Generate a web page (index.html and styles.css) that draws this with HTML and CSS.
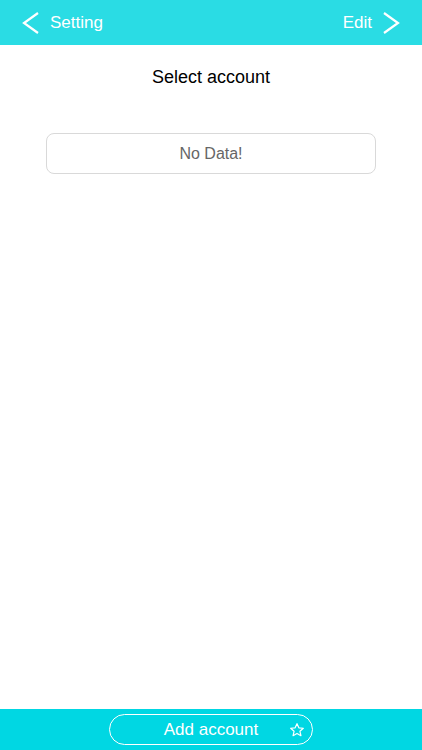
FILE: index.html
```html
<!DOCTYPE html>
<html lang="en">
<head>
  <meta charset="UTF-8" />
  <meta name="viewport" content="width=device-width, initial-scale=1.0"/>
  <title>Select account</title>
  <link rel="stylesheet" href="styles.css">
</head>
<body>
  <div class="app">
    <header class="nav-bar">
      <a class="nav-link" href="#">
        <svg class="chevron" width="18" height="22" viewBox="0 0 18 22">
          <polyline points="16,1 2,11 16,21" fill="none" stroke="#fff" stroke-width="2.2" stroke-linejoin="miter"/>
        </svg>
        <span>Setting</span>
      </a>
      <a class="nav-link" href="#">
        <span>Edit</span>
        <svg class="chevron" width="18" height="22" viewBox="0 0 18 22">
          <polyline points="2,1 16,11 2,21" fill="none" stroke="#fff" stroke-width="2.2" stroke-linejoin="miter"/>
        </svg>
      </a>
    </header>

    <main class="content">
      <h2 class="title">Select account</h2>
      <div class="empty-box">No Data!</div>
    </main>

    <footer class="bottom-bar">
      <button class="add-btn">
        <span>Add account</span>
        <svg class="star" width="16" height="16" viewBox="0 0 24 24">
          <polygon points="12,2.5 14.8,8.8 21.5,9.4 16.4,13.9 17.9,20.6 12,17.1 6.1,20.6 7.6,13.9 2.5,9.4 9.2,8.8" fill="none" stroke="#fff" stroke-width="1.8" stroke-linejoin="round"/>
        </svg>
      </button>
    </footer>
  </div>
</body>
</html>
```

FILE: styles.css
```css
body {
  margin: 0;
  font-family: 'Liberation Sans', Arial, sans-serif;
  background: #fff;
}
.app {
  display: flex;
  flex-direction: column;
  height: 750px;
}
.nav-bar {
  height: 45px;
  background-color: #2adce4;
  display: flex;
  justify-content: space-between;
  align-items: center;
  padding: 0 22px 0 22px;
  flex-shrink: 0;
}
.nav-link {
  display: flex;
  align-items: center;
  gap: 10px;
  color: #fff;
  text-decoration: none;
  font-size: 17px;
}
.chevron {
  display: block;
}
.content {
  flex: 1;
  display: flex;
  flex-direction: column;
  align-items: center;
}
.title {
  margin: 21px 0 0;
  font-size: 18px;
  font-weight: normal;
  color: #000;
  line-height: 22px;
}
.empty-box {
  margin-top: 45px;
  width: 328px;
  height: 39px;
  border: 1px solid #d9d9d9;
  border-radius: 8px;
  display: flex;
  justify-content: center;
  align-items: center;
  color: #666;
  font-size: 16px;
}
.bottom-bar {
  height: 41px;
  background-color: #00d7e3;
  display: flex;
  justify-content: center;
  align-items: center;
  flex-shrink: 0;
}
.add-btn {
  position: relative;
  width: 204px;
  height: 31px;
  border: 1.5px solid #fff;
  border-radius: 16px;
  background: transparent;
  color: #fff;
  font-family: 'Liberation Sans', Arial, sans-serif;
  font-size: 17px;
  padding: 0;
  display: flex;
  justify-content: center;
  align-items: center;
}
.star {
  position: absolute;
  right: 7px;
  top: 7px;
}
```
